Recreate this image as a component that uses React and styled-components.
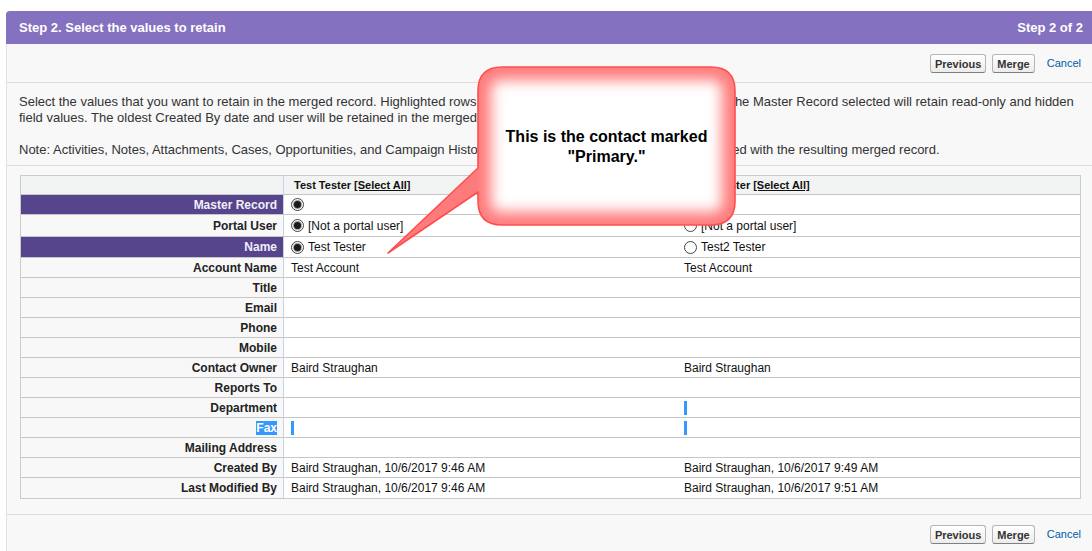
import React from "react";
import styled, { createGlobalStyle } from "styled-components";

const Global = createGlobalStyle`
  html, body { margin: 0; padding: 0; background: #fff; }
  body { font-family: "Liberation Sans", Arial, sans-serif; color: #222; overflow: hidden; }
  * { box-sizing: border-box; }
`;

const Page = styled.div`
  position: relative;
  width: 1092px;
  height: 551px;
  padding-top: 11px;
  padding-left: 6px;
  overflow: hidden;
`;

const Panel = styled.div`
  width: 1086px;
  background: #f8f8f8;
  border-left: 1px solid #e2e2e2;
  border-top-left-radius: 4px;
  min-height: 540px;
`;

const Header = styled.div`
  height: 33px;
  background: #8471c0;
  border-top-left-radius: 4px;
  margin-left: -1px;
  padding: 0 9px 0 13px;
  display: flex;
  align-items: center;
  justify-content: space-between;
  color: #fff;
  font-weight: bold;
  font-size: 13px;
`;

const ButtonBar = styled.div`
  height: ${(p) => p.$h}px;
  display: flex;
  align-items: flex-start;
  justify-content: flex-end;
  padding-right: 11px;
  padding-top: ${(p) => p.$pt}px;
  gap: 6px;
  border-${(p) => (p.$top ? "top" : "bottom")}: 1px solid #dcdcdc;
`;

const Btn = styled.button`
  font-family: "Liberation Sans", Arial, sans-serif;
  font-weight: bold;
  font-size: 11px;
  color: #333;
  height: 19px;
  padding: 0 4px;
  border: 1px solid #b5b5b5;
  border-bottom-color: #7f7f7f;
  border-radius: 3px;
  background: linear-gradient(#ffffff, #ececec);
  cursor: pointer;
`;

const CancelLink = styled.a`
  font-size: 11px;
  line-height: 19px;
  color: #015ba7;
  text-decoration: none;
  margin-left: 6px;
`;

const Intro = styled.div`
  padding: 11px 11px 7px 12px;
  font-size: 13px;
  line-height: 16px;
  color: #333;
  border-bottom: 1px solid #dcdcdc;
`;

const Para = styled.p`
  margin: 0 0 16px;
  &:last-child { margin-bottom: 0; }
`;

const Table = styled.div`
  margin: 9px 11px 15px 13px;
  border: 1px solid #c8ccd0;
  background: #fff;
`;

const Row = styled.div`
  display: grid;
  grid-template-columns: 263px 393px 1fr;
  height: ${(p) => p.$h}px;
  border-bottom: ${(p) => (p.$last ? "none" : "1px solid #c6c6c6")};
  background: ${(p) => (p.$head ? "#f2f3f3" : "#fff")};
`;

const Label = styled.div`
  display: flex;
  align-items: center;
  justify-content: flex-end;
  padding-right: 6px;
  font-weight: bold;
  font-size: 12px;
  border-right: 1px solid #c5d3e8;
  background: ${(p) => (p.$purple ? "#56458c" : p.$head ? "#f2f3f3" : "#f8f8f8")};
  color: ${(p) => (p.$purple ? "#f0eef8" : "#222")};
`;

const Selected = styled.span`
  background: #3399ff;
  color: #fff;
`;

const Cell = styled.div`
  display: flex;
  align-items: center;
  padding-left: ${(p) => (p.$head ? 10 : 7)}px;
  font-size: ${(p) => (p.$head ? 11 : 12)}px;
  font-weight: ${(p) => (p.$head ? "bold" : "normal")};
  color: #111;
  white-space: nowrap;
`;

const SelectAll = styled.span`
  text-decoration: underline;
  margin-left: 3px;
`;

const Radio = styled.span`
  position: relative;
  width: 13px;
  height: 13px;
  border-radius: 50%;
  border: 1px solid #444;
  background: #fff;
  margin-right: 4px;
  flex: none;
  &::after {
    content: "";
    display: ${(p) => (p.$on ? "block" : "none")};
    position: absolute;
    left: 2px;
    top: 2px;
    width: 7px;
    height: 7px;
    border-radius: 50%;
    background: #1a1a1a;
    box-shadow: 0 0 0 1px #9a9a9a;
  }
`;

const Caret = styled.span`
  display: inline-block;
  width: 3px;
  height: 14px;
  background: #3399ff;
`;

const CalloutArt = styled.svg`
  position: absolute;
  left: 380px;
  top: 60px;
  overflow: visible;
  pointer-events: none;
`;

const CalloutText = styled.div`
  position: absolute;
  left: 478px;
  top: 67px;
  width: 257px;
  height: 158px;
  display: flex;
  align-items: center;
  justify-content: center;
  text-align: center;
  font-weight: bold;
  font-size: 16px;
  line-height: 20px;
  color: #000;
  padding-top: 2px;
`;

const rows = [
  { label: "Master Record", purple: true, h: 20, a: { radio: true, on: true }, b: { radio: true, on: false } },
  { label: "Portal User", h: 22, a: { radio: true, on: true, text: "[Not a portal user]" }, b: { radio: true, on: false, text: "[Not a portal user]" } },
  { label: "Name", purple: true, h: 21, a: { radio: true, on: true, text: "Test Tester" }, b: { radio: true, on: false, text: "Test2 Tester" } },
  { label: "Account Name", h: 20, a: { text: "Test Account" }, b: { text: "Test Account" } },
  { label: "Title", h: 20 },
  { label: "Email", h: 20 },
  { label: "Phone", h: 20 },
  { label: "Mobile", h: 20 },
  { label: "Contact Owner", h: 20, a: { text: "Baird Straughan" }, b: { text: "Baird Straughan" } },
  { label: "Reports To", h: 20 },
  { label: "Department", h: 20, b: { caret: true } },
  { label: "Fax", h: 20, selected: true, a: { caret: true }, b: { caret: true } },
  { label: "Mailing Address", h: 20 },
  { label: "Created By", h: 20, a: { text: "Baird Straughan, 10/6/2017 9:46 AM" }, b: { text: "Baird Straughan, 10/6/2017 9:49 AM" } },
  { label: "Last Modified By", h: 20, a: { text: "Baird Straughan, 10/6/2017 9:46 AM" }, b: { text: "Baird Straughan, 10/6/2017 9:51 AM" } },
];

function Value({ v }) {
  if (!v) return <Cell />;
  return (
    <Cell>
      {v.radio && <Radio $on={v.on} />}
      {v.caret && <Caret />}
      {v.text}
    </Cell>
  );
}

function Buttons({ top, h, pt }) {
  return (
    <ButtonBar $top={top} $h={h} $pt={pt}>
      <Btn>Previous</Btn>
      <Btn>Merge</Btn>
      <CancelLink href="#">Cancel</CancelLink>
    </ButtonBar>
  );
}

const calloutPath =
  "M 122 7 H 331 Q 355 7 355 31 V 141 Q 355 165 331 165 H 122 Q 98 165 98 141 V 132 L 8 193 L 98 108 V 31 Q 98 7 122 7 Z";

export default function App() {
  return (
    <Page>
      <Global />
      <Panel>
        <Header>
          <span>Step 2. Select the values to retain</span>
          <span>Step 2 of 2</span>
        </Header>
        <Buttons h={39} pt={10} />
        <Intro>
          <Para>
            Select the values that you want to retain in the merged record. Highlighted rows indicate fields that contain conflicting data. The Master Record selected will retain read-only and hidden field values. The oldest Created By date and user will be retained in the merged record.
          </Para>
          <Para>
            Note: Activities, Notes, Attachments, Cases, Opportunities, and Campaign History of the non-master records will be associated with the resulting merged record.
          </Para>
        </Intro>
        <Table>
          <Row $head $h={19}>
            <Label $head />
            <Cell $head>
              Test Tester <SelectAll>[Select All]</SelectAll>
            </Cell>
            <Cell $head>
              Test2 Tester <SelectAll>[Select All]</SelectAll>
            </Cell>
          </Row>
          {rows.map((r, i) => (
            <Row key={r.label} $h={r.h} $last={i === rows.length - 1}>
              <Label $purple={r.purple}>
                {r.selected ? <Selected>{r.label}</Selected> : r.label}
              </Label>
              <Value v={r.a} />
              <Value v={r.b} />
            </Row>
          ))}
        </Table>
        <Buttons top h={60} pt={10} />
      </Panel>

      <CalloutArt width="360" height="200" viewBox="0 0 360 200">
        <defs>
          <clipPath id="callClip">
            <path d={calloutPath} />
          </clipPath>
          <filter id="glow" x="-20%" y="-20%" width="140%" height="140%">
            <feGaussianBlur stdDeviation="7" />
          </filter>
        </defs>
        <path d={calloutPath} fill="#ffffff" />
        <g clipPath="url(#callClip)">
          <path d={calloutPath} fill="none" stroke="#ff7a7a" strokeWidth="26" filter="url(#glow)" />
        </g>
        <path d={calloutPath} fill="none" stroke="#ff4d4d" strokeWidth="1.6" strokeLinejoin="round" />
      </CalloutArt>
      <CalloutText>
        <div>
          This is the contact marked
          <br />
          "Primary."
        </div>
      </CalloutText>
    </Page>
  );
}
